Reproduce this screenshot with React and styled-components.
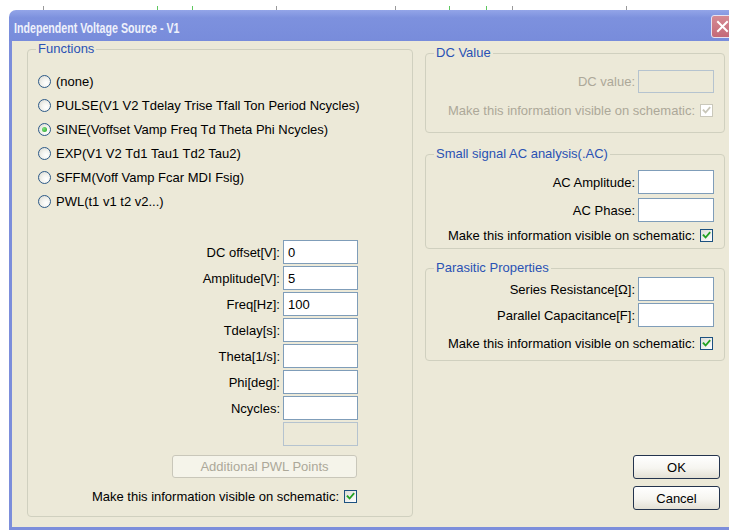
import React from 'react';
import styled, { createGlobalStyle } from 'styled-components';

const GlobalStyle = createGlobalStyle`
  html, body { margin: 0; padding: 0; background: #ffffff; overflow: hidden; }
  body {
    font-family: "Liberation Sans", Arial, sans-serif;
    font-size: 13px;
    color: #000;
  }
  * { box-sizing: border-box; }
`;

const Screen = styled.div`
  width: 729px;
  height: 530px;
  overflow: hidden;
`;

const Backdrop = styled.svg`
  display: block;
  width: 729px;
  height: 10px;
`;

const Window = styled.div`
  margin-left: 9px;
  width: 731px;
  display: flex;
  flex-direction: column;
`;

const TitleBar = styled.div`
  height: 31px;
  border-radius: 7px 7px 0 0;
  background: linear-gradient(#93a5e8 0%, #7d91de 25%, #788cdb 100%);
  display: flex;
  align-items: center;
  justify-content: space-between;
  padding-left: 5px;
`;

/* narrow bold caption, squeezed horizontally like the classic caption face */
const TitleText = styled.span`
  font-family: "Liberation Sans", Arial, sans-serif;
  font-weight: bold;
  font-size: 15px;
  color: #eef1fb;
  padding-top: 3px;
  transform: scaleX(0.71);
  transform-origin: left center;
  white-space: nowrap;
`;

const CloseButton = styled.div`
  width: 23px;
  height: 23px;
  margin-right: 6px;
  margin-top: 1px;
  border: 1px solid #e6e2f0;
  border-radius: 3px;
  background: linear-gradient(#d58a94, #c46a78);
  display: flex;
  align-items: center;
  justify-content: center;
`;

const Frame = styled.div`
  border: 3px solid #7c8edb;
  border-top: none;
`;

const Body = styled.div`
  height: 486px;
  background: #ece9d8;
  display: grid;
  grid-template-columns: 386px 300px;
  column-gap: 12px;
  padding: 1px 0 10px 15px;
`;

const Group = styled.fieldset`
  margin: 0;
  padding: 0;
  min-width: 0;
  border: 1px solid #d0d0bf;
  border-radius: 4px;
  margin-top: ${p => p.$top || 0}px;
`;

const Legend = styled.legend`
  margin-left: 8px;
  padding: 0 2px;
  line-height: 14px;
  font-size: 13px;
  color: #2a52b4;
`;

const GroupContent = styled.div`
  display: flex;
  flex-direction: column;
  padding: ${p => p.$pt}px ${p => p.$pr}px ${p => p.$pb}px ${p => p.$pl}px;
  gap: ${p => p.$gap || 0}px;
`;

const RadioList = styled.div`
  display: flex;
  flex-direction: column;
  align-self: stretch;
`;

const RadioRow = styled.label`
  height: 24px;
  display: flex;
  align-items: center;
  gap: 5px;
  white-space: nowrap;
`;

const RadioDot = styled.span`
  width: 13px;
  height: 13px;
  border-radius: 50%;
  border: 1px solid #2c5a88;
  background: radial-gradient(circle at 65% 65%, #ffffff 0%, #f4f4f0 40%, #d6d6ce 100%);
  display: flex;
  align-items: center;
  justify-content: center;
  flex: none;
  &::after {
    content: "";
    width: 5px;
    height: 5px;
    border-radius: 50%;
    background: radial-gradient(circle at 35% 35%, #7ee07e, #21a121);
    display: ${p => (p.$on ? 'block' : 'none')};
  }
`;

const FieldGrid = styled.div`
  align-self: flex-end;
  display: grid;
  grid-template-columns: auto 75px;
  grid-auto-rows: 24px;
  column-gap: 3px;
  row-gap: 2px;
  margin-top: 27px;
`;

const FieldLabel = styled.span`
  justify-self: end;
  align-self: center;
  white-space: nowrap;
  color: ${p => (p.$disabled ? '#aca899' : '#000')};
`;

const TextBox = styled.div`
  width: ${p => p.$w || 75}px;
  height: ${p => p.$h || 24}px;
  border: 1px solid ${p => (p.$disabled ? '#b5c3cf' : '#7f9db9')};
  background: ${p => (p.$disabled ? '#ece9d8' : '#ffffff')};
  padding-left: 4px;
  display: flex;
  align-items: center;
  flex: none;
`;

const PwlButton = styled.div`
  align-self: flex-end;
  margin-right: 1px;
  margin-top: 9px;
  width: 185px;
  height: 23px;
  border: 1px solid #c9c7ba;
  border-radius: 3px;
  background: #f5f4ea;
  color: #aca899;
  display: flex;
  align-items: center;
  justify-content: center;
`;

const CheckRow = styled.div`
  align-self: flex-end;
  height: ${p => p.$h || 16}px;
  margin-top: ${p => p.$mt || 0}px;
  margin-right: 1px;
  display: flex;
  align-items: center;
  gap: 5px;
  white-space: nowrap;
  color: ${p => (p.$disabled ? '#aca899' : '#000')};
`;

const CheckBox = styled.span`
  width: 13px;
  height: 13px;
  border: 1px solid ${p => (p.$disabled ? '#cac8bb' : '#1c5180')};
  background: ${p => (p.$disabled ? '#ffffff' : 'linear-gradient(135deg, #dcdcd7, #ffffff)')};
  display: flex;
  align-items: center;
  justify-content: center;
  flex: none;
`;

const PropRow = styled.div`
  display: flex;
  justify-content: flex-end;
  align-items: center;
  gap: 3px;
  white-space: nowrap;
  margin-top: ${p => p.$mt || 0}px;
  color: ${p => (p.$disabled ? '#aca899' : '#000')};
`;

const RightColumn = styled.div`
  display: flex;
  flex-direction: column;
  padding-top: 4px;
`;

const ButtonStack = styled.div`
  margin-top: auto;
  margin-bottom: 7px;
  margin-right: 5px;
  display: flex;
  flex-direction: column;
  align-items: flex-end;
  gap: 7px;
`;

const PushButton = styled.div`
  width: 87px;
  height: 24px;
  border: 1px solid #24344e;
  border-radius: 3px;
  background: linear-gradient(#ffffff 0%, #f6f5f0 55%, #e3e0d4 100%);
  display: flex;
  align-items: center;
  justify-content: center;
`;

const Tick = ({ disabled }) => (
  <svg width="9" height="9" viewBox="0 0 9 9">
    <path
      d="M1.5 4.2 L3.6 6.5 L7.6 1.8"
      fill="none"
      stroke={disabled ? '#c8c6b8' : '#21a121'}
      strokeWidth="1.8"
      strokeLinecap="square"
    />
  </svg>
);

const Check = ({ disabled }) => (
  <CheckBox $disabled={disabled}>
    <Tick disabled={disabled} />
  </CheckBox>
);

const functions = [
  '(none)',
  'PULSE(V1 V2 Tdelay Trise Tfall Ton Period Ncycles)',
  'SINE(Voffset Vamp Freq Td Theta Phi Ncycles)',
  'EXP(V1 V2 Td1 Tau1 Td2 Tau2)',
  'SFFM(Voff Vamp Fcar MDI Fsig)',
  'PWL(t1 v1 t2 v2...)',
];

const sineFields = [
  ['DC offset[V]:', '0'],
  ['Amplitude[V]:', '5'],
  ['Freq[Hz]:', '100'],
  ['Tdelay[s]:', ''],
  ['Theta[1/s]:', ''],
  ['Phi[deg]:', ''],
  ['Ncycles:', ''],
];

const ticks = [
  [43, '#9a9a9a'], [157, '#5ec85e'], [192, '#5ec85e'], [276, '#9a9a9a'],
  [395, '#9a9a9a'], [449, '#5ec85e'], [486, '#5ec85e'], [512, '#9a9a9a'], [626, '#9a9a9a'],
];

const VISIBLE = 'Make this information visible on schematic:';

export default function App() {
  return (
    <Screen>
      <GlobalStyle />
      <Backdrop viewBox="0 0 729 10">
        {ticks.map(([x, c]) => (
          <line key={x} x1={x + 0.5} y1="6" x2={x + 0.5} y2="10" stroke={c} strokeWidth="1" />
        ))}
      </Backdrop>
      <Window>
        <TitleBar>
          <TitleText>Independent Voltage Source - V1</TitleText>
          <CloseButton>
            <svg width="13" height="13" viewBox="0 0 13 13">
              <path d="M2 2 L11 11 M11 2 L2 11" stroke="#fff" strokeWidth="2" strokeLinecap="square" />
            </svg>
          </CloseButton>
        </TitleBar>
        <Frame>
          <Body>
            <Group>
              <Legend>Functions</Legend>
              <GroupContent $pt={13} $pr={54} $pb={11} $pl={10}>
                <RadioList>
                  {functions.map((f, i) => (
                    <RadioRow key={f}>
                      <RadioDot $on={i === 2} />
                      {f}
                    </RadioRow>
                  ))}
                </RadioList>
                <FieldGrid>
                  {sineFields.map(([label, value]) => (
                    <React.Fragment key={label}>
                      <FieldLabel>{label}</FieldLabel>
                      <TextBox>{value}</TextBox>
                    </React.Fragment>
                  ))}
                  <span />
                  <TextBox $disabled />
                </FieldGrid>
                <PwlButton>Additional PWL Points</PwlButton>
                <CheckRow $mt={10} $h={17}>
                  {VISIBLE}
                  <Check />
                </CheckRow>
              </GroupContent>
            </Group>

            <RightColumn>
              <Group>
                <Legend>DC Value</Legend>
                <GroupContent $pt={10} $pr={10} $pb={14} $pl={10} $gap={9}>
                  <PropRow $disabled>
                    DC value:
                    <TextBox $disabled $w={76} $h={23} />
                  </PropRow>
                  <CheckRow $disabled>
                    {VISIBLE}
                    <Check disabled />
                  </CheckRow>
                </GroupContent>
              </Group>

              <Group $top={14}>
                <Legend>Small signal AC analysis(.AC)</Legend>
                <GroupContent $pt={9} $pr={10} $pb={5} $pl={10}>
                  <PropRow>
                    AC Amplitude:
                    <TextBox $w={76} />
                  </PropRow>
                  <PropRow $mt={4}>
                    AC Phase:
                    <TextBox $w={76} />
                  </PropRow>
                  <CheckRow $mt={5}>
                    {VISIBLE}
                    <Check />
                  </CheckRow>
                </GroupContent>
              </Group>

              <Group $top={12}>
                <Legend>Parasitic Properties</Legend>
                <GroupContent $pt={2} $pr={10} $pb={9} $pl={10}>
                  <PropRow>
                    Series Resistance[Ω]:
                    <TextBox $w={76} />
                  </PropRow>
                  <PropRow $mt={2}>
                    Parallel Capacitance[F]:
                    <TextBox $w={76} />
                  </PropRow>
                  <CheckRow $mt={8}>
                    {VISIBLE}
                    <Check />
                  </CheckRow>
                </GroupContent>
              </Group>

              <ButtonStack>
                <PushButton>OK</PushButton>
                <PushButton>Cancel</PushButton>
              </ButtonStack>
            </RightColumn>
          </Body>
        </Frame>
      </Window>
    </Screen>
  );
}
